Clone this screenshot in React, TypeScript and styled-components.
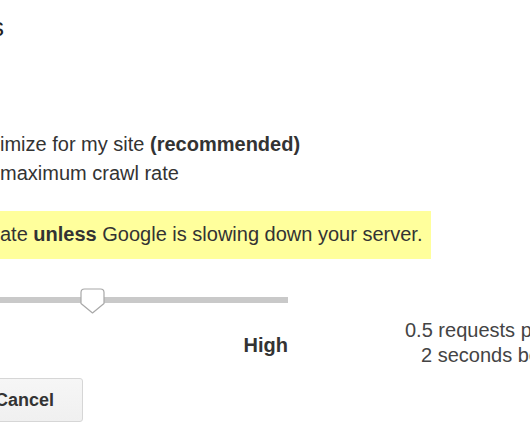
import React from 'react';
import styled, { createGlobalStyle } from 'styled-components';

const GlobalStyle = createGlobalStyle`
  html, body {
    margin: 0;
    padding: 0;
    background: #ffffff;
    overflow: hidden;
  }
  body {
    font-family: "Liberation Sans", Arial, Helvetica, sans-serif;
    color: #333333;
  }
`;

function Thumb() {
  return (
    <ThumbIcon width="25" height="26" viewBox="0 0 25 26">
      <path
        d="M1 4.5 Q1 1 4.5 1 H20.5 Q24 1 24 4.5 V15.5 L12.5 25 L1 15.5 Z"
        fill="#ffffff"
        stroke="#a8a8a8"
        strokeWidth="1.2"
        strokeLinejoin="round"
      />
    </ThumbIcon>
  );
}

function App() {
  return (
    <Page>
      <GlobalStyle />
      <TitleClip>
        <Title>Site Settings</Title>
      </TitleClip>

      <Options>
        <OptionRow>
          imize for my site <b>(recommended)</b>
        </OptionRow>
        <OptionRow>maximum crawl rate</OptionRow>
      </Options>

      <Notice>
        ate <b>unless</b> Google is slowing down your server.
      </Notice>

      <SliderRow>
        <SliderColumn>
          <Track>
            <ThumbSpot $left={80}>
              <Thumb />
            </ThumbSpot>
          </Track>
          <SliderLabel>High</SliderLabel>
        </SliderColumn>
        <RateColumn>
          <RateLine $indent={0}>0.5 requests per second</RateLine>
          <RateLine $indent={16}>2 seconds between requests</RateLine>
        </RateColumn>
      </SliderRow>

      <CancelButton type="button">Cancel</CancelButton>
    </Page>
  );
}

const Page = styled.div`
  display: flex;
  flex-direction: column;
  align-items: flex-start;
  padding-top: 11px;
  width: 530px;
  height: 443px;
  box-sizing: border-box;
`;

const TitleClip = styled.div`
  display: flex;
  justify-content: flex-end;
  width: 4px;
  overflow: hidden;
`;

const Title = styled.h1`
  flex-shrink: 0;
  margin: 0;
  font-size: 26px;
  line-height: 32px;
  font-weight: normal;
  color: #222222;
  white-space: nowrap;
`;

const Options = styled.div`
  display: flex;
  flex-direction: column;
  margin-top: 87px;
`;

const OptionRow = styled.div`
  font-size: 20px;
  line-height: 29px;
  white-space: nowrap;
  color: #333333;

  b {
    font-weight: bold;
  }
`;

const Notice = styled.div`
  margin-top: 23px;
  padding: 11px 13px 13px 0;
  width: 431px;
  box-sizing: border-box;
  background: #ffff9c;
  font-size: 20px;
  line-height: 24px;
  white-space: nowrap;
  color: #333333;
`;

const SliderRow = styled.div`
  display: flex;
  align-items: flex-start;
  margin-top: 38px;
`;

const SliderColumn = styled.div`
  display: flex;
  flex-direction: column;
  align-items: flex-end;
  width: 288px;
`;

const Track = styled.div`
  position: relative;
  width: 288px;
  height: 6px;
  background: #c9c9c9;
`;

const ThumbSpot = styled.div<{ $left: number }>`
  position: absolute;
  top: -9px;
  left: ${(p) => p.$left - 0.5}px;
  width: 25px;
  height: 26px;
`;

const ThumbIcon = styled.svg`
  display: block;
`;

const SliderLabel = styled.div`
  margin-top: 30px;
  font-size: 20px;
  line-height: 24px;
  font-weight: bold;
  color: #333333;
`;

const RateColumn = styled.div`
  display: flex;
  flex-direction: column;
  margin-left: 117px;
  padding-top: 21px;
`;

const RateLine = styled.div<{ $indent: number }>`
  padding-left: ${(p) => p.$indent}px;
  font-size: 20px;
  line-height: 25px;
  white-space: nowrap;
  color: #444444;
`;

const CancelButton = styled.button`
  margin-top: 10px;
  margin-left: -34px;
  padding: 10px 28px;
  border: 1px solid #d6d6d6;
  border-radius: 3px;
  background: linear-gradient(#f6f6f6, #f0f0f0);
  font-family: "Liberation Sans", Arial, Helvetica, sans-serif;
  font-size: 18px;
  line-height: 22px;
  font-weight: bold;
  color: #333333;
  cursor: pointer;
`;

export default App;
